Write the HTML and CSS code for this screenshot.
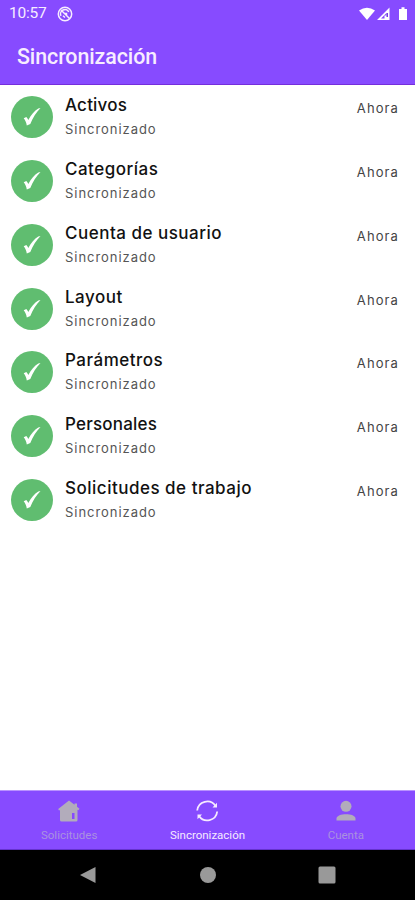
FILE: index.html
```html
<!DOCTYPE html>
<html lang="es">
<head>
<meta charset="utf-8">
<title>Sincronización</title>
<link rel="stylesheet" href="styles.css">
</head>
<body>
<svg class="defs" width="0" height="0"><symbol id="check" viewBox="0 0 42 42"><path d="M12.700 22.300l2.600-1.400c1 .9 1.600 1.900 2 3.200 2.900-5.400 6-9.200 10-11.600l2.200-.4c-4.300 4.500-7.700 9.800-10.200 16l-3.500 1.300c-.5-2.800-1.500-5.200-3.100-7.100z"/></symbol></svg>
<header class="header">
  <div class="status">
    <span class="clock">10:57</span>
    <svg class="notice" width="16" height="16" viewBox="0 0 16 16" fill="none" stroke="currentColor"><circle cx="8" cy="8" r="6.7" stroke-width="1.5"/><path d="M4 9.8A4.3 4.3 0 0 1 11.8 6M4 4l8.5 8.5M7 7.5h2.5v2M6 9.7l2 1.8" stroke-width="1.5"/></svg>
    <svg class="signals" width="50" height="16" viewBox="0 0 50 16" fill="currentColor"><path d="M1 4.5Q9 -1 17 4.5L9 14z"/><path fill-rule="evenodd" d="M31.500 1.500V14H19zM28.500 7L23 12.500h3.500V9.500h2z"/><path d="M28.500 7H30v4h-1.500z" fill="#7540e0"/><path d="M41 3h2.500V1.200h3V3H49v11h-8z"/></svg>
  </div>
  <h1>Sincronización</h1>
</header>
<main class="list">
  <article class="row"><div class="badge"><svg><use href="#check"/></svg></div><div class="copy"><h2 class="short">Activos</h2><p>Sincronizado</p></div><time>Ahora</time></article>
  <article class="row"><div class="badge"><svg><use href="#check"/></svg></div><div class="copy"><h2>Categorías</h2><p>Sincronizado</p></div><time>Ahora</time></article>
  <article class="row"><div class="badge"><svg><use href="#check"/></svg></div><div class="copy"><h2>Cuenta de usuario</h2><p>Sincronizado</p></div><time>Ahora</time></article>
  <article class="row"><div class="badge"><svg><use href="#check"/></svg></div><div class="copy"><h2>Layout</h2><p>Sincronizado</p></div><time>Ahora</time></article>
  <article class="row"><div class="badge"><svg><use href="#check"/></svg></div><div class="copy"><h2>Parámetros</h2><p>Sincronizado</p></div><time>Ahora</time></article>
  <article class="row"><div class="badge"><svg><use href="#check"/></svg></div><div class="copy"><h2 class="short">Personales</h2><p>Sincronizado</p></div><time>Ahora</time></article>
  <article class="row"><div class="badge"><svg><use href="#check"/></svg></div><div class="copy"><h2>Solicitudes de trabajo</h2><p>Sincronizado</p></div><time>Ahora</time></article>
</main>
<nav class="tabs">
  <div class="tab">
    <svg viewBox="0 0 24 24" fill="currentColor"><path fill-rule="evenodd" d="M12 1.500l5.500 4.300V4.500h2.500v3.300l2.500 2-1.200 1.400-.8-.5v10.300q0 1.500-1.500 1.500H4.500Q3 22.500 3 21V11l-1 .5-.8-1.500zM15 14v6h2.500v-6z"/></svg>
    <span>Solicitudes</span>
  </div>
  <div class="tab active">
    <svg viewBox="0 0 24 24" fill="none" stroke="currentColor" stroke-width="1.800"><path d="M2.200 11.500A10 10 0 0 1 20.500 7M22.200 12.500A10 10 0 0 1 4 17"/><path d="M22 3.800V8.500H17.500zM2.500 20.200v-4.700H7z" fill="currentColor" stroke="none"/></svg>
    <span>Sincronización</span>
  </div>
  <div class="tab">
    <svg viewBox="0 0 24 24" fill="currentColor"><circle cx="12" cy="7.300" r="5.500"/><path d="M2.500 21.500v-2C2.500 13.800 21.500 13.800 21.500 19.500v2z"/></svg>
    <span>Cuenta</span>
  </div>
</nav>
<footer class="system">
  <svg viewBox="0 0 18 18"><path d="M16.500 1v16L1 9z"/></svg>
  <svg viewBox="0 0 18 18"><circle cx="9" cy="9" r="8"/></svg>
  <svg viewBox="0 0 18 18"><rect x=".5" y=".5" width="17" height="17" rx="1.500"/></svg>
</footer>
</body>
</html>
```

FILE: styles.css
```css
* { box-sizing: border-box; }
body { margin: 0; height: 900px; display: flex; flex-direction: column; overflow: hidden; background: #fff; font-family: Roboto, sans-serif; }
h1, h2, p { margin: 0; }
.defs { display: none; }
.header { height: 85px; flex: none; color: #f7edff; background: #874bff; border-bottom: 1px solid #752edb; }
.status { height: 27px; display: flex; align-items: center; padding: 0 7px 0 9px; }
.clock { width: 48px; font-size: 15.500px; line-height: 27px; letter-spacing: -.2px; }
.signals { margin-left: auto; color: #fff; }
h1 { padding-left: 17px; font-size: 21.400px; font-weight: 500; line-height: 60px; letter-spacing: -.08px; }
.list { flex: 1; min-height: 0; padding-top: 11px; font-family: Inter, sans-serif; }
.row { height: 63.850px; display: flex; align-items: flex-start; padding: 0 16px 0 11px; }
.badge { width: 42px; height: 42px; flex: none; border-radius: 50%; background: #60bd70; }
.badge svg { display: block; width: 42px; height: 42px; fill: #fff; }
.copy { flex: 1; padding-left: 12px; white-space: nowrap; }
h2 { margin-top: -1px; font-size: 17px; font-weight: 500; line-height: 20px; letter-spacing: .5px; color: #111; }
h2.short { letter-spacing: .2px; }
p { margin-top: 4px; font-size: 13px; line-height: 20px; letter-spacing: .95px; color: #555; }
time { margin-top: 2px; font-size: 13px; line-height: 20px; letter-spacing: 1.1px; color: #444; }
.tabs { height: 60px; flex: none; display: grid; grid-template-columns: repeat(3, 1fr); background: #874bff; border-top: 1px solid #b992ff; border-bottom: 1px solid #6532ce; }
.tab { display: flex; flex-direction: column; align-items: center; padding-top: 8px; color: #b2acbb; }
.tab svg { width: 24px; height: 24px; }
.tab span { margin-top: 5px; font-size: 11.500px; line-height: 14px; color: #aa91df; }
.tab.active, .tab.active span { color: #f6eaff; }
.system { height: 50px; flex: none; display: flex; justify-content: center; gap: 101.500px; padding-top: 16px; background: #000; }
.system svg { width: 18px; height: 18px; fill: #999; }
```
